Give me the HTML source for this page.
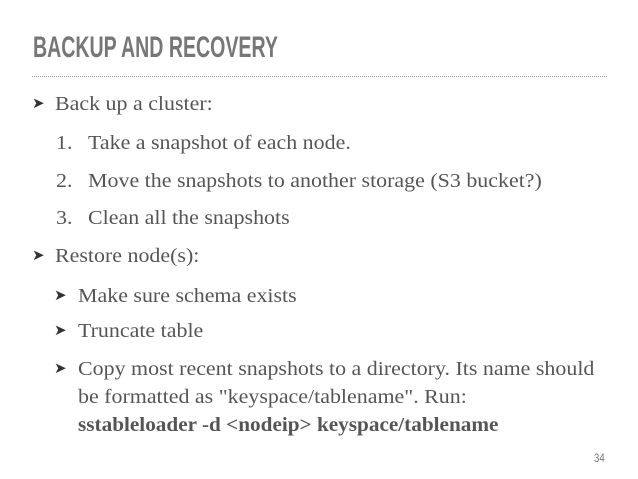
<!DOCTYPE html>
<html><head><style>
body{margin:0;width:638px;height:479px;background:#fff;position:relative;overflow:hidden;font-family:"Liberation Serif",serif;color:#555;}
.t{position:absolute;white-space:nowrap;font-size:20.5px;line-height:22px;transform:scaleX(1.07);transform-origin:left top;}
.title{position:absolute;left:33px;top:31px;font-family:"Liberation Sans",sans-serif;font-weight:bold;font-size:30px;color:#777;transform:scaleX(0.652);transform-origin:left top;white-space:nowrap;}
.dots{position:absolute;left:32px;top:76px;width:575px;border-top:1px dotted #999;}
.a{position:absolute;font-size:15px;color:#333;}
b{font-weight:bold;color:#555}
</style></head><body>
<div class="title">BACKUP AND RECOVERY</div>
<div class="dots"></div>
<div class="a" style="left:32px;top:94px">➤</div><div class="t" style="left:55px;top:93px">Back up a cluster:</div>
<div class="t" style="left:56px;top:132px">1.</div><div class="t" style="left:88px;top:132px">Take a snapshot of each node.</div>
<div class="t" style="left:56px;top:170px">2.</div><div class="t" style="left:88px;top:170px">Move the snapshots to another storage (S3 bucket?)</div>
<div class="t" style="left:56px;top:207px">3.</div><div class="t" style="left:88px;top:207px">Clean all the snapshots</div>
<div class="a" style="left:32px;top:246px">➤</div><div class="t" style="left:55px;top:245px">Restore node(s):</div>
<div class="a" style="left:54px;top:286px">➤</div><div class="t" style="left:78px;top:285px">Make sure schema exists</div>
<div class="a" style="left:54px;top:321px">➤</div><div class="t" style="left:78px;top:320px">Truncate table</div>
<div class="a" style="left:54px;top:359px">➤</div><div class="t" style="left:78px;top:358px">Copy most recent snapshots to a directory. Its name should</div>
<div class="t" style="left:78px;top:386px">be formatted as "keyspace/tablename". Run:</div>
<div class="t" style="left:78px;top:414px;transform:scaleX(1.035)"><b>sstableloader -d &lt;nodeip&gt; keyspace/tablename</b></div>
<div style="position:absolute;left:594px;top:451px;font-family:'Liberation Sans',sans-serif;font-size:12px;color:#777;transform:scaleX(0.8);transform-origin:left top">34</div>
</body></html>
